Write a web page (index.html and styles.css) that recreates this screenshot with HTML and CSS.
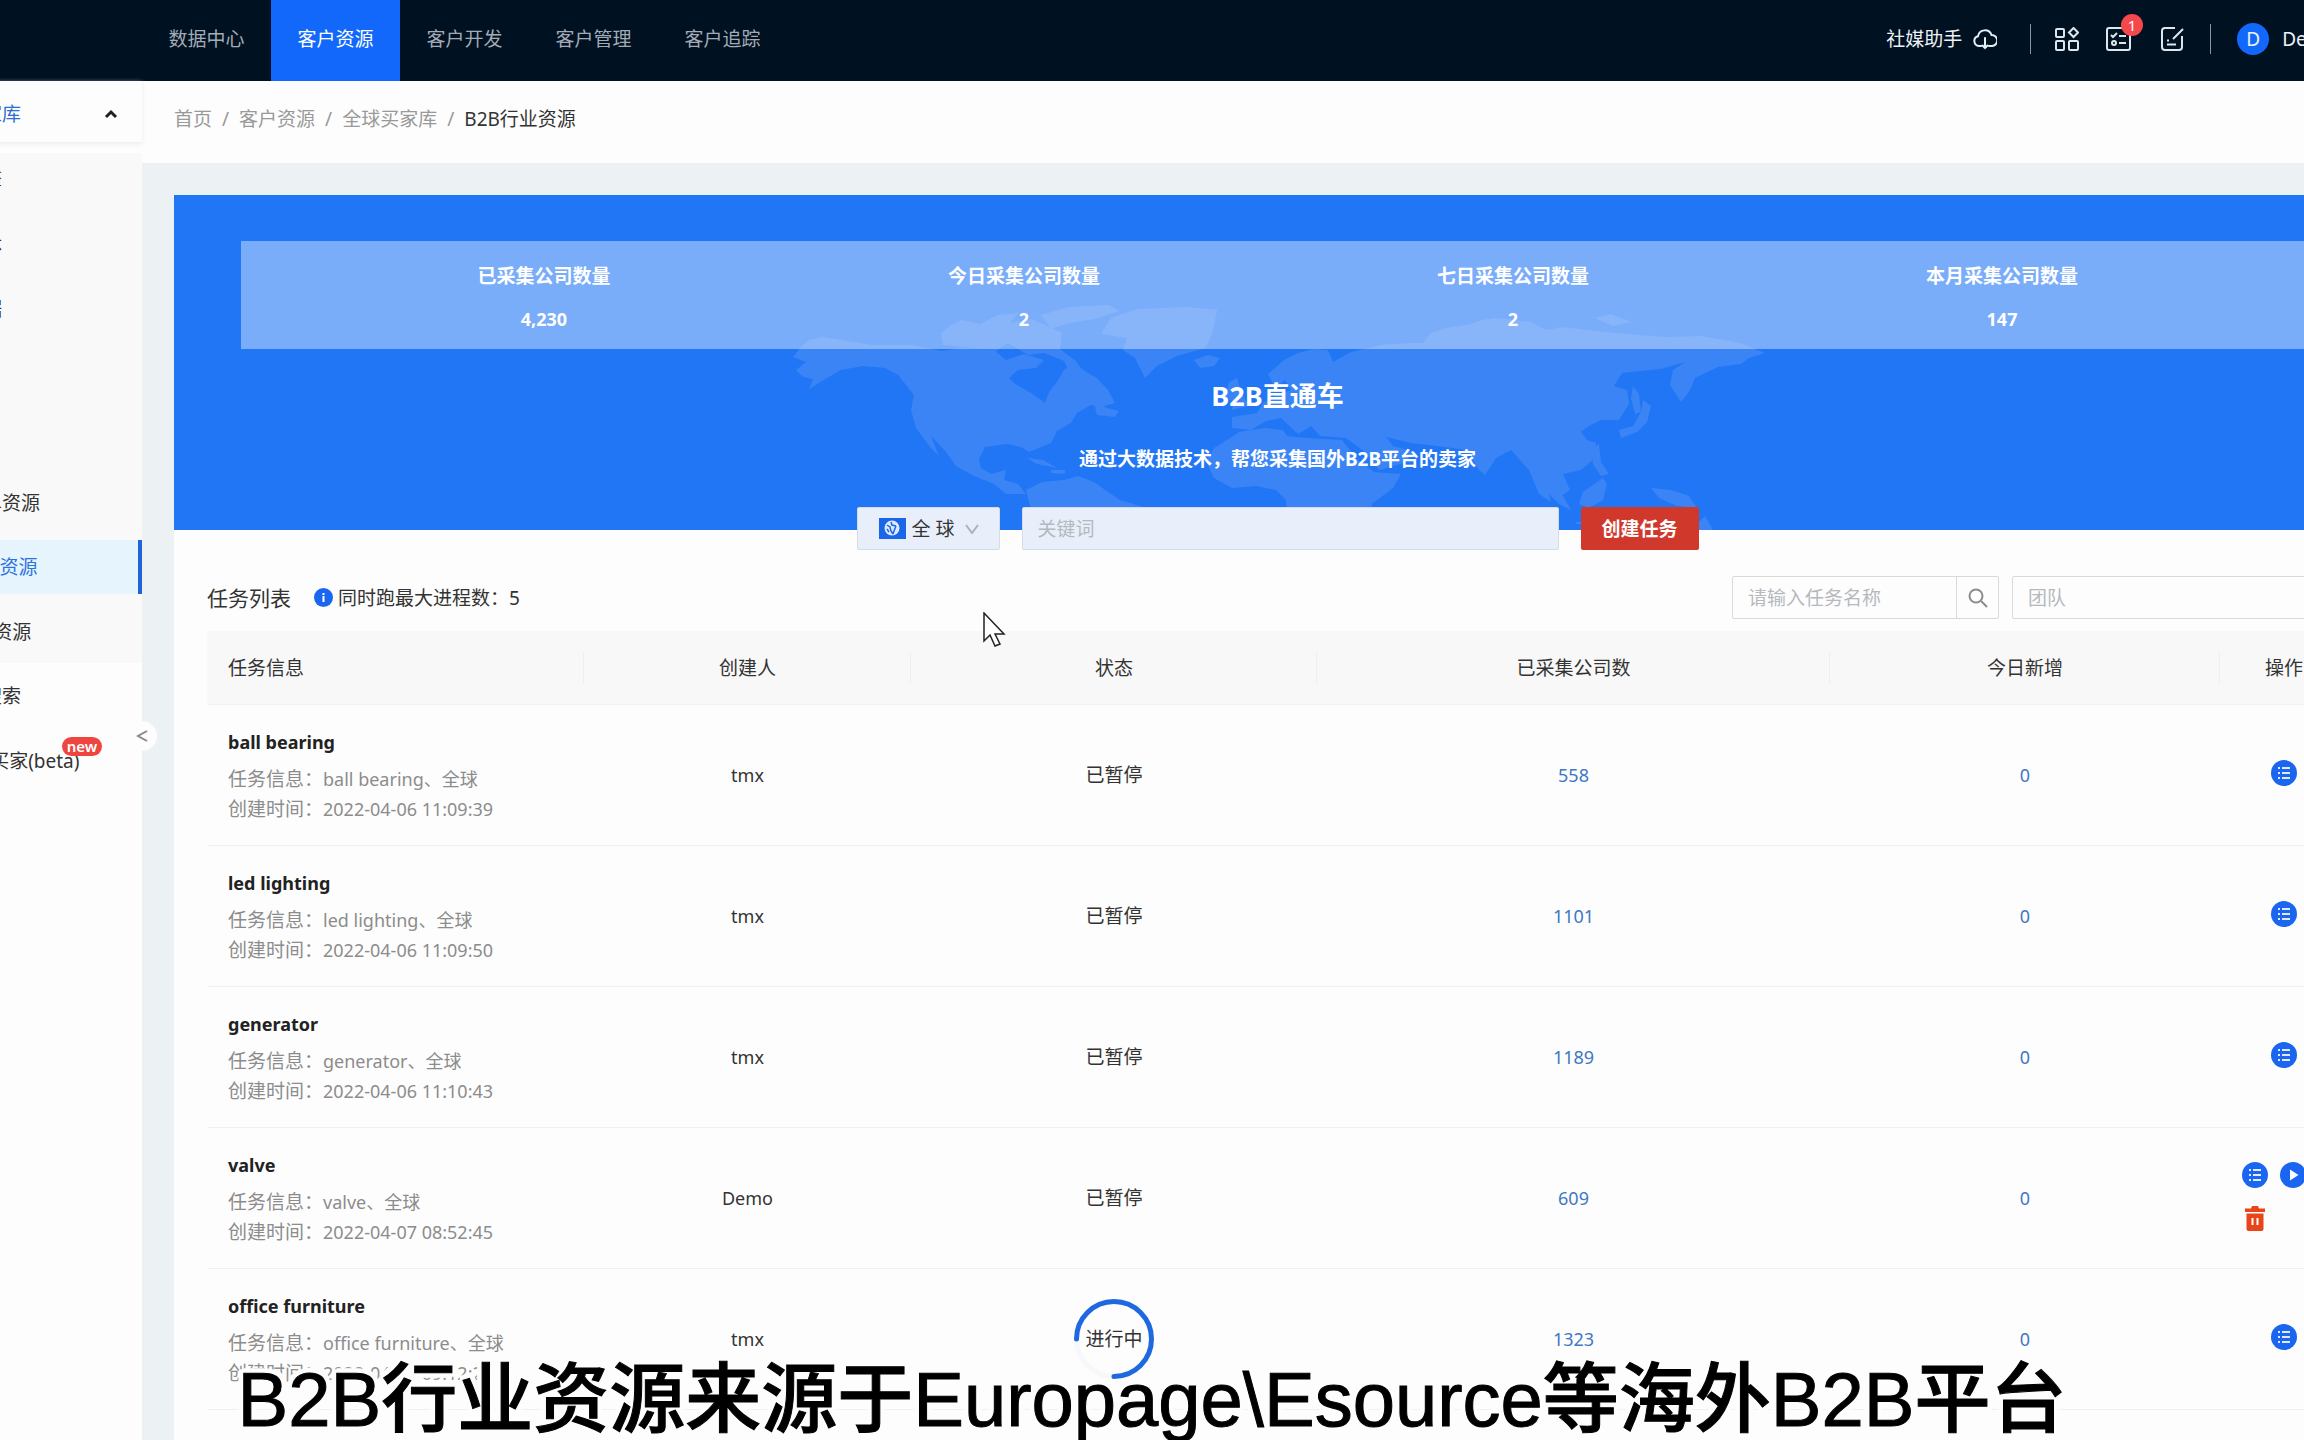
FILE: index.html
```html
<!DOCTYPE html>
<html lang="zh-CN">
<head>
<meta charset="utf-8">
<title>B2B行业资源</title>
<link rel="stylesheet" href="styles.css">
</head>
<body>
<svg class="symbols" aria-hidden="true">
  <symbol id="icon-list" viewBox="0 0 26 26">
    <circle cx="13" cy="13" r="13" fill="#1a66f0"/>
    <path d="M7 8h2M11 8h8M7 13h2M11 13h8M7 18h2M11 18h8" stroke="#dfeaff" stroke-width="2" fill="none"/>
  </symbol>
  <symbol id="icon-play" viewBox="0 0 26 26">
    <circle cx="13" cy="13" r="13" fill="#1a66f0"/>
    <path d="M10 7.500v11l8.500-5.500z" fill="#fff"/>
  </symbol>
  <symbol id="icon-trash" viewBox="0 0 26 26">
    <path d="M3 3.500h6L10 1h6l1 2.500h6V7H3zM4.500 8.500h17V24a2 2 0 0 1-2 2h-13a2 2 0 0 1-2-2z" fill="#e8451a"/>
    <path d="M10.500 13v7M15.500 13v7" stroke="#fff" stroke-width="2"/>
  </symbol>
</svg>
<div class="app">
  <header class="topbar">
    <nav class="topnav">
      <a href="#">数据中心</a>
      <a href="#" class="current">客户资源</a>
      <a href="#">客户开发</a>
      <a href="#">客户管理</a>
      <a href="#">客户追踪</a>
    </nav>
    <div class="tools">
      <a href="#" class="helper">社媒助手
        <svg width="24" height="22" viewBox="0 0 24 22" fill="none" stroke="#e6eef5" stroke-width="2" stroke-linecap="round"><path d="M8 18H6a5 5 0 0 1-1-9.800A7 7 0 0 1 18.500 7a5.500 5.500 0 0 1 .500 11h-3M12 10v10M9.500 17.500L12 20l2.500-2.500"/></svg>
      </a>
      <span class="divider"></span>
      <button class="tool" aria-label="应用"><svg width="24" height="24" viewBox="0 0 24 24" fill="none" stroke="#dde6ee" stroke-width="2"><rect x="1" y="2" width="8" height="8" rx="1"/><rect x="1" y="14" width="8" height="9" rx="1"/><rect x="14" y="14" width="9" height="9" rx="1"/><path d="M18.500 1l4.500 4.500-4.500 4.500L14 5.500z"/></svg></button>
      <button class="tool tasks" aria-label="任务"><svg width="25" height="24" viewBox="0 0 25 24" fill="none" stroke="#dde6ee" stroke-width="2"><rect x="1" y="1" width="23" height="22" rx="2"/><path d="M5 8l2 2 4-4M13 9h7M13 16h7"/><circle cx="8" cy="16" r="2"/></svg><span class="count">1</span></button>
      <button class="tool edit" aria-label="编辑"><svg width="23" height="24" viewBox="0 0 23 24" fill="none" stroke="#dde6ee" stroke-width="2"><path d="M14 1H4a3 3 0 0 0-3 3v16a3 3 0 0 0 3 3h14a3 3 0 0 0 3-3V9M12 12L22 2M6 17.500h9M6 13.500h2"/></svg></button>
      <span class="divider"></span>
      <a href="#" class="user"><span class="avatar">D</span>Demo</a>
    </div>
  </header>

  <div class="body">
    <aside class="sidebar">
      <button class="side-head">全球买家库
        <svg width="14" height="10" viewBox="0 0 14 10" fill="none" stroke="#222" stroke-width="3"><path d="M2 8l5-5 5 5"/></svg>
      </button>
      <ul class="side-list">
        <li><a href="#">搜索引擎</a></li>
        <li><a href="#">社交媒体</a></li>
        <li><a href="#">海关数据</a></li>
        <li></li>
        <li></li>
        <li><a href="#">海关提单资源</a></li>
        <li><a href="#" class="current">B2B行业资源</a></li>
        <li><a href="#">VIP行业资源</a></li>
        <li class="plain"><a href="#">企业名搜索</a></li>
        <li class="plain"><a href="#">Google买家(beta)</a><span class="new">new</span></li>
      </ul>
      <button class="collapse" aria-label="收起"><svg width="12" height="12" viewBox="0 0 12 12" fill="none" stroke="#888" stroke-width="2"><path d="M11 1L2 6l9 5"/></svg></button>
    </aside>

    <main class="main">
      <nav class="crumbs">
        <a href="#">首页</a><span>/</span><a href="#">客户资源</a><span>/</span><a href="#">全球买家库</a><span>/</span><b>B2B行业资源</b>
      </nav>

      <section class="panel">
        <div class="banner">
          <svg class="map" viewBox="777 300 1000 230" fill="#3a84f5" aria-hidden="true">
            <path d="M792 357L800 347L808 340L822 337L871 345L911 345L941 351L961 348L993 350L1005 360L1023 354L1043 360L1035 368L1017 370L1008 378L1014 384L1030 393L1044 403L1048 392L1056 382L1063 370L1075 362L1082 370L1096 378L1107 390L1114 403L1100 407L1090 405L1076 413L1070 423L1056 431L1050 443L1028 452L1020 447L1006 444L984 447L978 459L980 468L990 474L1005 470L1003 480L1017 484L1025 494L1005 494L993 484L973 476L955 466L945 452L930 436L938 456L929 447L915 428L910 410L913 395L897 375L884 368L862 366L840 370L826 378L808 389L812 379L802 377L795 370L805 362Z"/>
            <path d="M942 345l-2-12 10-8 11-5 18 4 18-9 20-2-8 10 22-4 30 14-2 16 16 12 10 18-14-2-8-16-20-8-16 2-20-12-12 8-30-4z"/>
            <path d="M1040 315l28-8 40-2 10 6-24 8-26 4-18 6zM1100 334l10-16 26-9 50-2 30 3-4 22-8 16-28 8-20 10-12 12-10-20-12-8 4-12z"/>
            <path d="M1193 360l14-5 12 3-6 8-14 2zM1092 400l14 8 12 3-4 6-18-2z"/>
            <path d="M1025 490l16-8 22-2 14-4 16 6 14 10 12 8 20 6 20 6 4 18h-130l-4-24z"/>
            <path d="M1026 458l16 2 14 8-20-4zM1050 470h14v4l-14-1z"/>
            <path d="M1231 428L1231 417L1256 413L1262 403L1276 395L1290 390L1284 380L1274 388L1267 374L1283 360L1297 353L1312 349L1327 350L1332 362L1350 352L1380 345L1410 343L1422 343L1430 333L1445 328L1470 324L1480 320L1496 318L1530 322L1545 330L1562 327L1585 330L1625 334L1665 337L1700 336L1739 343L1764 353L1748 358L1740 364L1717 367L1694 378L1688 392L1680 402L1669 385L1672 370L1684 362L1660 369L1621 373L1613 386L1626 390L1628 404L1618 420L1600 420L1588 426L1580 432L1586 440L1595 443L1594 458L1580 470L1562 474L1569 490L1560 496L1552 486L1545 484L1550 502L1538 494L1528 470L1510 450L1495 458L1484 475L1478 470L1466 450L1444 447L1410 443L1385 437L1392 446L1415 452L1400 464L1378 470L1364 452L1345 438L1319 436L1310 426L1297 434L1280 418L1265 421L1250 430Z"/>
            <path d="M1224 398l4-16 8-4 4 14 8 14-18 4 4-8z"/>
            <path d="M1238 432l26-4 18 2 4 6 20 2 35 2 16 20 16 12 27 2-8 14-21 16-2 40h-82l-2-44-10-10-20-4-24 2-18-10-8-16 8-14 16-10z"/>
            <path d="M1534 476l12 6 14 10 10 18-12-6-14-14zM1582 492l20-14 4 6-4 16-14 8-10-4zM1650 488l20 2 18 6 8 12-20-2-18-8zM1618 430l14-4 8-14 2-12 8 6-4 16-10 10-16 6zM1632 386l6 8 2 18-6 2-4-16zM1590 450l8-6 2 18 8 12-8 2-8-12zM1690 530l14-14 8 14zM1575 522h50v4l-50-2zM1594 318l16-4 20 8-18 4z"/>
          </svg>
          <dl class="stats">
            <div><dt>已采集公司数量</dt><dd>4,230</dd></div>
            <div><dt>今日采集公司数量</dt><dd>2</dd></div>
            <div><dt>七日采集公司数量</dt><dd>2</dd></div>
            <div><dt>本月采集公司数量</dt><dd>147</dd></div>
          </dl>
          <h1>B2B直通车</h1>
          <p>通过大数据技术，帮您采集国外B2B平台的卖家</p>
        </div>
        <form class="create">
          <div class="region">
            <svg width="27" height="21" viewBox="0 0 27 21"><path fill="#1a66e8" d="M0 0h27v21H0z"/><circle cx="13" cy="10" r="7.500" fill="#dfeaff"/><path d="M8 7l3 2 1 4 2 3M12 4l1 3 4 1M17 8l-2 5-1 3M8 11l2 3" stroke="#1a66e8" stroke-width="1.500" fill="none"/></svg>
            <select aria-label="地区"><option>全 球</option></select>
            <svg width="14" height="10" viewBox="0 0 14 10" fill="none" stroke="#aab2bd" stroke-width="2"><path d="M1 1l6 8 6-8"/></svg>
          </div>
          <input type="text" placeholder="关键词" aria-label="关键词">
          <button type="button">创建任务</button>
        </form>

        <div class="list">
          <div class="list-head">
            <h2>任务列表</h2>
            <svg width="19" height="19" viewBox="0 0 19 19"><circle cx="9.500" cy="9.500" r="9.500" fill="#1a66f0"/><path d="M9.500 8v6M9.500 5v2" stroke="#fff" stroke-width="2"/></svg>
            <span>同时跑最大进程数：5</span>
            <div class="filters">
              <div class="search">
                <input type="text" placeholder="请输入任务名称" aria-label="任务名称">
                <button aria-label="搜索"><svg width="20" height="20" viewBox="0 0 20 20" fill="none" stroke="#8c8c8c" stroke-width="2"><circle cx="8" cy="8" r="6.500"/><path d="M13 13l6 6"/></svg></button>
              </div>
              <select class="team" aria-label="团队"><option>团队</option></select>
            </div>
          </div>
          <table>
            <colgroup><col><col class="c-owner"><col class="c-state"><col class="c-total"><col class="c-today"><col class="c-act"></colgroup>
            <thead><tr><th>任务信息</th><th>创建人</th><th>状态</th><th>已采集公司数</th><th>今日新增</th><th>操作</th></tr></thead>
            <tbody>
              <tr>
                <td><h3>ball bearing</h3><p>任务信息：<span>ball bearing、全球</span></p><p>创建时间：<span>2022-04-06 11:09:39</span></p></td>
                <td>tmx</td><td>已暂停</td><td><a href="#">558</a></td><td><a href="#">0</a></td>
                <td><div class="acts"><button aria-label="详情"><svg><use href="#icon-list"/></svg></button></div></td>
              </tr>
              <tr>
                <td><h3>led lighting</h3><p>任务信息：<span>led lighting、全球</span></p><p>创建时间：<span>2022-04-06 11:09:50</span></p></td>
                <td>tmx</td><td>已暂停</td><td><a href="#">1101</a></td><td><a href="#">0</a></td>
                <td><div class="acts"><button aria-label="详情"><svg><use href="#icon-list"/></svg></button></div></td>
              </tr>
              <tr>
                <td><h3>generator</h3><p>任务信息：<span>generator、全球</span></p><p>创建时间：<span>2022-04-06 11:10:43</span></p></td>
                <td>tmx</td><td>已暂停</td><td><a href="#">1189</a></td><td><a href="#">0</a></td>
                <td><div class="acts"><button aria-label="详情"><svg><use href="#icon-list"/></svg></button></div></td>
              </tr>
              <tr>
                <td><h3>valve</h3><p>任务信息：<span>valve、全球</span></p><p>创建时间：<span>2022-04-07 08:52:45</span></p></td>
                <td>Demo</td><td>已暂停</td><td><a href="#">609</a></td><td><a href="#">0</a></td>
                <td><div class="acts many"><button aria-label="详情"><svg><use href="#icon-list"/></svg></button><button aria-label="开始"><svg><use href="#icon-play"/></svg></button><button aria-label="删除"><svg><use href="#icon-trash"/></svg></button></div></td>
              </tr>
              <tr>
                <td><h3>office furniture</h3><p>任务信息：<span>office furniture、全球</span></p><p>创建时间：<span>2022-04-07 09:12:21</span></p></td>
                <td>tmx</td>
                <td><div class="running"><svg viewBox="0 0 80 80" fill="none" stroke-width="5"><circle cx="40" cy="40" r="37.500" stroke="#f6f8fa"/><path d="M2.500 40a37.500 37.500 0 1 1 37.500 37.500" stroke="#1f69e0" stroke-linecap="round"/></svg><span>进行中</span></div></td>
                <td><a href="#">1323</a></td><td><a href="#">0</a></td>
                <td><div class="acts"><button aria-label="详情"><svg><use href="#icon-list"/></svg></button></div></td>
              </tr>
            </tbody>
          </table>
        </div>
      </section>
    </main>
  </div>
</div>
<svg class="pointer" width="24" height="35" viewBox="0 0 24 35" fill="#fff" stroke="#222" stroke-width="1.500" aria-hidden="true"><path d="M1 1v28l6-6 5 11 5-2-5-10h9z"/></svg>
<p class="caption">B2B行业资源来源于Europage\Esource等海外B2B平台</p>
</body>
</html>
```
FILE: styles.css
```css
* { box-sizing: border-box; margin: 0; padding: 0; }
html, body { height: 100%; overflow: hidden; }
body {
  position: relative;
  background: #fdfdfd;
  color: #333;
  font: 19px/30px "Noto Sans", "Noto Sans CJK SC", sans-serif;
}
a { color: inherit; text-decoration: none; }
button, input, select { font: inherit; color: inherit; border: 0; background: none; appearance: none; outline: 0; }
svg { display: block; flex: none; }
ul { list-style: none; }
.symbols { position: absolute; width: 0; height: 0; }

/* the workspace is a little wider than the window */
.app { display: flex; flex-direction: column; min-height: 100%; margin-right: -108px; }

.topbar {
  display: flex;
  justify-content: space-between;
  height: 81px;
  padding: 0 76px 0 142px;
  background: #001122;
  color: #a3acb5;
}
.topnav { display: flex; }
.topnav a { width: 129px; line-height: 79px; text-align: center; }
.topnav .current { background: #1268fb; color: #fff; }
.tools { display: flex; align-items: center; height: 78px; color: #eef2f6; }
.helper { display: flex; align-items: center; gap: 11px; }
.divider { width: 1px; height: 30px; margin: 0 24px 0 33px; background: #8a949e; }
.tool { position: relative; margin-right: 27px; }
.tool.tasks { margin-right: 30px; }
.tool.edit { margin-right: 0; }
.edit + .divider { margin: 0 26px; }
.count {
  position: absolute;
  top: -13px;
  right: -12px;
  width: 22px;
  border-radius: 50%;
  background: #f5484b;
  color: #fff;
  font-size: 15px;
  line-height: 22px;
}
.user { display: flex; align-items: center; gap: 13px; }
.avatar { width: 32px; border-radius: 50%; background: #1268fb; line-height: 32px; text-align: center; }

.body { display: flex; flex: 1; }

.sidebar { position: relative; flex: none; width: 256px; margin-left: -114px; background: #fdfdfd; }
.side-head {
  display: flex;
  align-items: center;
  justify-content: space-between;
  width: 100%;
  height: 61px;
  padding: 5px 24px 0 40px;
  color: #2c6fd1;
  box-shadow: 0 2px 5px #ececec;
}
.side-list {
  display: flex;
  flex-direction: column;
  justify-content: space-between;
  min-height: 635px;
  margin-top: 11px;
  background: linear-gradient(#f9f9f9 510px, transparent 510px);
}
.side-list li { position: relative; min-height: 54px; }
.side-list a { display: block; padding-left: 40px; line-height: 54px; white-space: nowrap; }
.side-list .current { border-right: 4px solid #2463d6; background: #e6f4fe; color: #2c73dc; }
.new {
  position: absolute;
  top: 3px;
  right: 40px;
  width: 40px;
  border-radius: 10px;
  background: #ee4540;
  color: #fff;
  font-size: 15px;
  font-weight: 600;
  line-height: 19px;
  text-align: center;
}
.collapse {
  position: absolute;
  top: 640px;
  right: -15px;
  z-index: 1;
  display: flex;
  align-items: center;
  justify-content: center;
  width: 30px;
  height: 30px;
  border-radius: 50%;
  background: #fdfdfd;
}

.main { display: flex; flex: 1; flex-direction: column; min-width: 0; background: #ecf2f3; }
.crumbs { display: flex; gap: 10px; height: 82px; padding-left: 32px; background: #fdfdfd; color: #999; line-height: 76px; }
.crumbs b { color: #333; font-weight: 400; }
.panel { flex: 1; margin: 32px 31px 0 32px; background: #fdfdfd; }

.banner {
  position: relative;
  height: 335px;
  padding: 46px 67px 0;
  background: #2176f5;
  color: #fff;
  font-weight: 700;
  text-align: center;
}
.map { position: absolute; bottom: 0; left: calc(50% - 500px); width: 1000px; height: 230px; }
.stats {
  position: relative;
  display: grid;
  grid-template-columns: 480fr 480fr 498fr 480fr;
  height: 108px;
  padding: 20px 72px 0 63px;
  background: rgba(255, 255, 255, .4);
}
.stats dd { margin-top: 13px; font-size: 18px; }
.banner h1 { position: relative; margin-top: 27px; font-size: 27px; line-height: 40px; }
.banner p { position: relative; margin-top: 28px; }

.create { position: relative; display: flex; justify-content: center; gap: 22px; height: 43px; margin-top: -23px; }
.region {
  display: flex;
  align-items: center;
  width: 143px;
  padding-left: 21px;
  border: 1px solid #d5dce6;
  border-radius: 2px;
  background: #e8effb;
}
.region select { width: 59px; padding-left: 6px; white-space: nowrap; }
.create input { width: 537px; padding: 0 15px; border: 1px solid #d5dce6; border-radius: 2px; background: #e8effb; }
.create button { width: 118px; border-radius: 2px; background: #d1382c; color: #fff; font-weight: 700; }
::placeholder { color: #b5b9be; opacity: 1; }

.list { padding: 26px 33px 0; }
.list-head { display: flex; align-items: center; height: 43px; margin-bottom: 12px; }
.list-head h2 { margin-right: 23px; font-size: 21px; font-weight: 400; }
.list-head span { margin-left: 5px; }
.filters { display: flex; gap: 13px; margin-left: auto; }
.search { display: flex; width: 267px; height: 43px; border: 1px solid #d9d9d9; border-radius: 2px; }
.search input { flex: 1; min-width: 0; padding-left: 15px; }
.search button { display: flex; align-items: center; justify-content: center; width: 42px; border-left: 1px solid #d9d9d9; }
.team { width: 336px; height: 43px; padding-left: 15px; border: 1px solid #d9d9d9; border-radius: 2px; color: #b5b9be; }

table { width: 100%; border-collapse: separate; border-spacing: 0; table-layout: fixed; text-align: center; }
.c-owner { width: 327px; }
.c-state { width: 406px; }
.c-total { width: 513px; }
.c-today { width: 390px; }
.c-act { width: 128px; }
th {
  height: 74px;
  border-bottom: 1px solid #f2f2f2;
  background: linear-gradient(#efefef, #efefef) right center / 1px 32px no-repeat #f8f8f8;
  font-weight: 400;
}
th:first-child { padding-left: 21px; text-align: left; }
th:last-child { background: #f8f8f8; }
td { height: 141px; border-bottom: 1px solid #f1f1f1; }
td:first-child { padding-left: 21px; text-align: left; color: #8c8c8c; }
td a { color: #3f78c4; }
td h3 { margin-bottom: 7px; color: #222; font-size: 18px; font-weight: 700; line-height: 30px; }
td span, td:nth-child(2), td a { font-size: 18px; }
td .running span { font-size: 19px; }
.acts { display: flex; flex-wrap: wrap; justify-content: center; gap: 17px 12px; padding-bottom: 4px; }
.acts.many { justify-content: flex-start; width: 84px; margin: 0 auto; }
.acts button, .acts svg { width: 26px; height: 26px; }
.running { display: grid; place-items: center; }
.running > * { grid-area: 1 / 1; }
.running svg { width: 80px; height: 80px; }

.pointer { position: absolute; top: 612px; left: 983px; }
.caption {
  position: absolute;
  bottom: -8px;
  left: 0;
  width: 100%;
  color: #000;
  font: 500 76px/96px "Liberation Sans", "Noto Sans CJK SC", sans-serif;
  text-align: center;
  white-space: nowrap;
  -webkit-text-stroke: 1px #000;
  text-shadow:
    -5px 0 #fdfdfd, 5px 0 #fdfdfd, 0 -5px #fdfdfd, 0 5px #fdfdfd,
    -4px -4px #fdfdfd, 4px -4px #fdfdfd, -4px 4px #fdfdfd, 4px 4px #fdfdfd,
    0 0 8px #fdfdfd;
}
```
